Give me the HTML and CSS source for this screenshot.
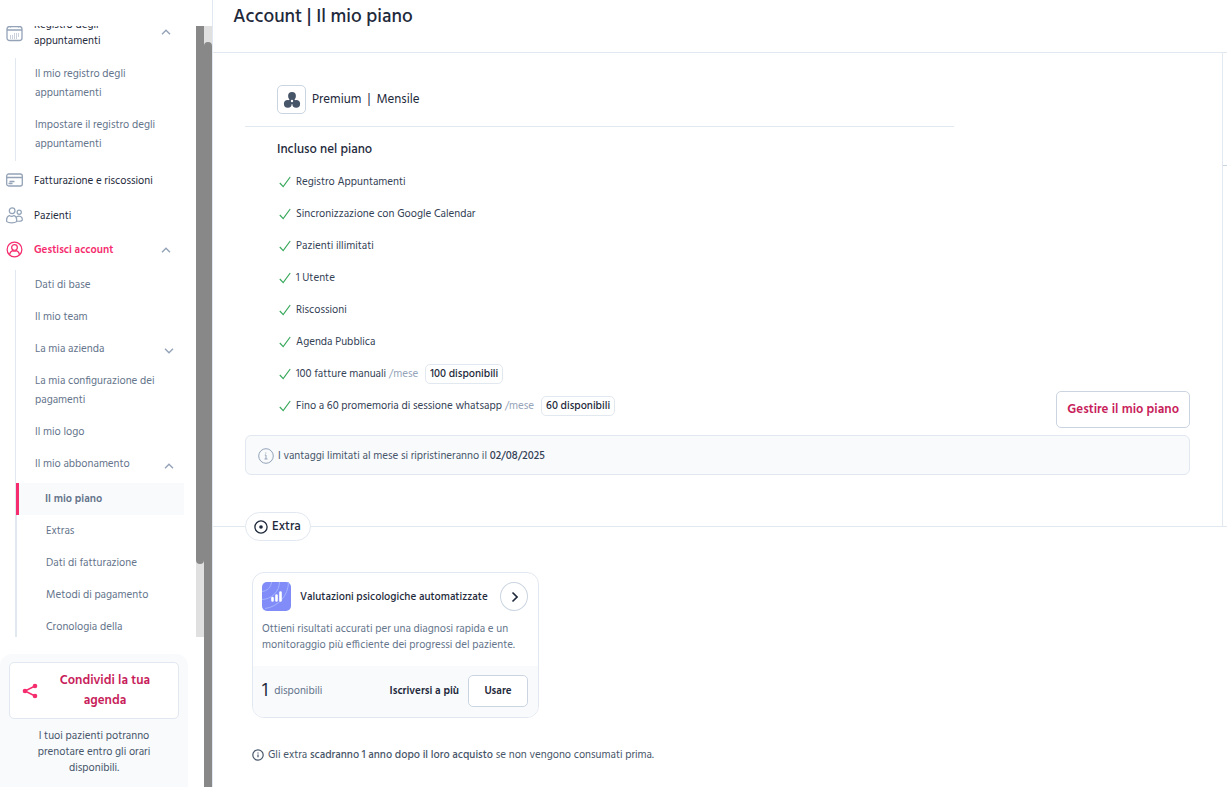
FILE: index.html
```html
<!DOCTYPE html>
<html lang="it">
<head>
<meta charset="utf-8">
<title>Account | Il mio piano</title>
<link rel="stylesheet" href="styles.css">
</head>
<body>
<svg class="defs" aria-hidden="true">
  <symbol id="up" viewBox="0 0 10 6"><path d="M1 5.2 5 1.2 9 5.2"/></symbol>
  <symbol id="down" viewBox="0 0 10 6"><path d="M1 .8 5 4.8 9 .8"/></symbol>
  <symbol id="check" viewBox="0 0 12 12"><path d="M.8 7 4.2 10.6 11.2 1"/></symbol>
</svg>
<div class="app">
  <aside class="sidebar">
    <div class="sidebar-body">
      <div class="scroller">
        <nav class="nav">
          <a class="item first" href="#">
            <svg class="icon" viewBox="0 0 17 17"><rect x="1" y="1.500" width="15" height="14" rx="2.500"/><path d="M1 5h15M4.500 0v2.500M12.500 0v2.500"/><path class="dots" d="M4.500 10.500v3M6.500 10.500v3M8.500 8.500v5M10.500 8.500v5M12.500 8.500v3"/></svg>
            <span class="label">Registro degli appuntamenti</span>
            <svg class="chev"><use href="#up"/></svg>
          </a>
          <div class="sub">
            <a href="#">Il mio registro degli appuntamenti</a>
            <a href="#">Impostare il registro degli appuntamenti</a>
          </div>
          <a class="item" href="#">
            <svg class="icon" viewBox="0 0 17 17"><rect x=".7" y="2" width="15.600" height="12" rx="2"/><path d="M.7 5.500h15.600M3.500 9.500h5M2.500 11.500h4"/></svg>
            <span class="label">Fatturazione e riscossioni</span>
          </a>
          <a class="item" href="#">
            <svg class="icon" viewBox="0 0 18 18"><circle cx="6.500" cy="4" r="3"/><circle cx="14" cy="5.500" r="2.200"/><path d="M3.500 9C1 10 .4 13 .8 15.500c2 1.800 8.400 1.800 10.400 0C11.600 13 11 10 8.500 9c-1.500 1-3.500 1-5 0zM11 10.500c3-2 6.800-.5 6.200 3.500-1 1-3.500 1.200-5.500 1"/></svg>
            <span class="label">Pazienti</span>
          </a>
          <a class="item active" href="#">
            <svg class="icon" viewBox="0 0 18 18"><circle cx="9" cy="9" r="7.800"/><circle cx="9" cy="6.800" r="3"/><path d="M3.800 14.500c.2-2.500 1.700-3.800 3.400-4.300 1 .7 2.600.7 3.600 0 1.700.5 3.200 1.800 3.400 4.300"/></svg>
            <span class="label">Gestisci account</span>
            <svg class="chev"><use href="#up"/></svg>
          </a>
          <div class="sub account">
            <a href="#">Dati di base</a>
            <a href="#">Il mio team</a>
            <a href="#">La mia azienda <svg class="chev"><use href="#down"/></svg></a>
            <a href="#">La mia configurazione dei pagamenti</a>
            <a href="#">Il mio logo</a>
            <a href="#">Il mio abbonamento <svg class="chev"><use href="#up"/></svg></a>
            <div class="nested">
              <a class="current" href="#">Il mio piano</a>
              <a href="#">Extras</a>
              <a href="#">Dati di fatturazione</a>
              <a href="#">Metodi di pagamento</a>
              <a href="#">Cronologia della</a>
            </div>
          </div>
        </nav>
        <div class="track"><div class="thumb inner"></div></div>
      </div>
      <div class="share">
        <button class="share-btn" type="button">
          <svg viewBox="0 0 16 16"><path d="M13 3 3 8l10 5"/><circle cx="3" cy="8" r="2.300"/><circle cx="13" cy="3" r="2.300"/><circle cx="13" cy="13" r="2.300"/></svg>
          <span>Condividi la tua agenda</span>
        </button>
        <p>I tuoi pazienti potranno prenotare entro gli orari disponibili.</p>
      </div>
    </div>
    <div class="track"><div class="thumb outer"></div></div>
  </aside>

  <main class="main">
    <header class="top"><h1>Account | Il mio piano</h1></header>
    <div class="panel-row">
      <section class="panel">
        <div class="plan">
          <div class="plan-info">
            <div class="plan-name">
              <span class="plan-icon"><svg viewBox="0 0 18 18"><path d="M9 3.500 4 13h10z"/><circle cx="9" cy="5" r="3.900"/><circle cx="4.800" cy="12.800" r="3.900"/><circle cx="13.200" cy="12.800" r="3.900"/><circle class="hole" cx="9" cy="10" r="1.200"/></svg></span>
              <span>Premium</span><span>|</span><span>Mensile</span>
            </div>
            <h2>Incluso nel piano</h2>
            <ul class="features">
              <li><svg class="check"><use href="#check"/></svg>Registro Appuntamenti</li>
              <li><svg class="check"><use href="#check"/></svg>Sincronizzazione con Google Calendar</li>
              <li><svg class="check"><use href="#check"/></svg>Pazienti illimitati</li>
              <li><svg class="check"><use href="#check"/></svg>1 Utente</li>
              <li><svg class="check"><use href="#check"/></svg>Riscossioni</li>
              <li><svg class="check"><use href="#check"/></svg>Agenda Pubblica</li>
              <li><svg class="check"><use href="#check"/></svg>100 fatture manuali <small>/mese</small><b class="tag">100 disponibili</b></li>
              <li><svg class="check"><use href="#check"/></svg>Fino a 60 promemoria di sessione whatsapp <small>/mese</small><b class="tag">60 disponibili</b></li>
            </ul>
          </div>
          <button class="btn manage" type="button">Gestire il mio piano</button>
        </div>
        <div class="notice">
          <svg viewBox="0 0 16 16"><circle cx="8" cy="8" r="7.300"/><path d="M6.800 7H8v4M6.500 11h3M7.800 4.500v1"/></svg>
          <span>I vantaggi limitati al mese si ripristineranno il <b>02/08/2025</b></span>
        </div>
        <div class="pill">
          <svg viewBox="0 0 14 14"><circle cx="7" cy="7" r="6.100"/><circle class="dot" cx="7" cy="7" r="1.800"/></svg>
          <span>Extra</span>
        </div>
      </section>
      <div class="edge"></div>
    </div>

    <section class="extras">
      <article class="card">
        <div class="card-head">
          <svg class="logo" viewBox="0 0 29 29"><rect width="29" height="29" rx="5"/><g class="arcs"><path d="M0 9.500A10 10 0 0 0 9.500 0M0 17.500A18 18 0 0 0 17.500 0M3 26.500A27 27 0 0 0 26.500 0"/></g><path class="bars" d="M10.500 16V18.500M14.500 13.500V18.500M18.500 10.500V18.500"/></svg>
          <h3>Valutazioni psicologiche automatizzate</h3>
          <button class="round" type="button" aria-label="Apri"><svg viewBox="0 0 8 12"><path d="M2.500 1.500 7 6l-4.500 4.500"/></svg></button>
        </div>
        <p>Ottieni risultati accurati per una diagnosi rapida e un monitoraggio più efficiente dei progressi del paziente.</p>
        <div class="card-foot">
          <span class="count">1</span><span class="avail">disponibili</span>
          <a href="#">Iscriversi a più</a>
          <button class="btn use" type="button">Usare</button>
        </div>
      </article>
      <p class="note">
        <svg viewBox="0 0 12 12"><circle cx="6" cy="6" r="5.200"/><path d="M6 5.500V8.200M6 3.600v1"/></svg>
        <span>Gli extra <b>scadranno 1 anno dopo il loro acquisto</b> se non vengono consumati prima.</span>
      </p>
    </section>
  </main>
</div>
</body>
</html>
```
FILE: styles.css
```css
* { box-sizing: border-box; margin: 0; padding: 0; }
body {
  font-family: Hind, "Noto Sans", sans-serif;
  font-size: 11px;
  line-height: 16px;
  color: #1e293b;
  background: #fff;
}
a { color: inherit; text-decoration: none; }
button { font: inherit; cursor: pointer; background: #fff; }
svg { fill: none; stroke: currentColor; flex: none; }
.defs { display: none; }
.app { display: grid; grid-template-columns: 213px 1fr; grid-template-rows: minmax(0, 1fr); height: 100vh; overflow: hidden; }

.sidebar { display: flex; padding-top: 26px; border-right: 1px solid #e2e8f0; min-height: 0; }
.sidebar-body { flex: 1; display: flex; flex-direction: column; min-height: 0; }
.scroller { flex: 1; display: flex; min-height: 0; overflow: hidden; }
.nav { flex: 1; overflow: hidden; }
.track { width: 8px; background: #e0e0e0; }
.thumb { background: #888; }
.inner { height: 88%; border-radius: 0 0 4px 4px; }
.track:has(> .outer) { padding-top: 16px; }
.outer { height: 100%; border-radius: 4px 4px 0 0; }

.item { display: flex; align-items: center; height: 35px; padding: 0 24px 0 6px; gap: 11px; }
.item.first { height: 32px; margin: -9px 0 9px; }
.item.first .chev { margin-bottom: 2px; }
.label { flex: 1; }
.icon { width: 17px; height: 17px; color: #94a3b8; stroke-width: 1.3; }
.dots { stroke-width: 1; stroke-dasharray: 1 1; }
.chev { width: 10px; height: 6px; color: #94a3b8; stroke-width: 1.4; }
.item .chev { margin-right: 1px; }
.item.active { height: 33px; color: #f52d6e; font-weight: 600; }
.active .icon, .active .label { color: #f52d6e; }
.sub {
  display: flex; flex-direction: column; gap: 13px;
  margin: 0 12px 2px 15px; padding: 7px 0 7px 19px;
  border-left: 1px solid #e2e8f0;
  color: #64748b; line-height: 19px;
}
.sub a { display: flex; align-items: center; justify-content: space-between; padding-right: 10px; }
.sub .chev { margin-top: 3px; }
.sub.account { margin-top: 4px; padding: 6px 0 0 19px; }
.nested { margin: -4px 0 0 -19px; border-left: 1px solid #e2e8f0; }
.nested a { height: 32px; padding-left: 29px; }
.nested .current { margin-left: -1px; padding-left: 26px; border-left: 3px solid #f52d6e; background: #f8fafc; font-weight: 600; }

.share { width: 188px; height: 133px; margin-top: 17px; padding: 8px 9px; background: #f8fafc; border-radius: 12px 12px 0 0; text-align: center; color: #475569; }
.share-btn {
  display: flex; align-items: center; width: 100%; padding: 8px 12px 7px; margin-bottom: 9px;
  border: 1px solid #e2e8f0; border-radius: 5px;
  color: #c81e5b; font-size: 13px; line-height: 20px; font-weight: 600;
}
.share-btn span { flex: 1; padding: 0 12px 0 18px; }
.share-btn svg { width: 16px; height: 16px; stroke: #f52d6e; fill: #f52d6e; }
.share-btn circle { stroke: none; }
.share-btn path { fill: none; stroke-width: 1.5; }
.share p { padding: 0 20px; }

.main { min-width: 0; }
.top { height: 53px; padding: 5px 20px; border-bottom: 1px solid #e2e8f0; }
h1 { font-size: 19px; line-height: 25px; font-weight: 500; }
.panel-row { display: flex; border-bottom: 1px solid #e2e8f0; }
.panel { position: relative; flex: 1; padding: 32px; border-right: 1px solid #e2e8f0; }
.edge { width: 4px; height: 113px; border-bottom: 1px solid #cbd5e1; }
.plan { display: grid; grid-template-columns: 3fr 1fr; align-items: end; }
.plan-name { display: flex; align-items: center; gap: 6px; padding: 0 32px 12px; border-bottom: 1px solid #e2e8f0; font-size: 13px; }
.plan-icon { display: grid; place-items: center; width: 29px; height: 29px; border: 1px solid #cbd5e1; border-radius: 5px; color: #475569; }
.plan-icon svg { width: 18px; height: 18px; fill: currentColor; stroke: none; }
.plan-icon .hole { fill: #fff; }
h2 { padding: 14px 32px 7px; font-size: 13px; line-height: 18px; font-weight: 500; }
.features { list-style: none; padding: 0 34px 6px; color: #334155; }
.features li { display: flex; align-items: center; height: 32px; white-space: pre; }
.check { width: 12px; height: 12px; margin-right: 5px; color: #38a85c; stroke-width: 1.2; }
small { font-size: 11px; color: #94a3b8; }
b { font-weight: 500; }
.tag { margin-left: 7px; padding: 1px 4px; border: 1px solid #e2e8f0; border-radius: 5px; color: #1e293b; }
.btn { border: 1px solid #cbd5e1; border-radius: 5px; font-weight: 600; }
.manage { justify-self: end; height: 37px; padding: 0 10px; color: #c81e5b; font-size: 13px; }
.notice { display: flex; align-items: center; gap: 4px; height: 40px; margin: 7px 0 19px; padding: 1px 12px 0; border: 1px solid #e2e8f0; border-radius: 6px; background: #f8fafc; color: #475569; }
.notice svg { width: 16px; height: 16px; color: #94a3b8; }
.notice b { color: #334155; }
.pill { position: absolute; left: 32px; bottom: -15px; display: flex; align-items: center; gap: 4px; height: 29px; padding: 0 9px 0 8px; border: 1px solid #e2e8f0; border-radius: 15px; background: #fff; font-size: 13px; font-weight: 500; }
.pill svg { width: 14px; height: 14px; stroke-width: 1.3; }
.pill .dot { fill: currentColor; stroke: none; }

.extras { padding: 45px 39px; }
.card { width: 287px; border: 1px solid #e2e8f0; border-radius: 12px; overflow: hidden; }
.card-head { display: flex; align-items: center; padding: 9px 10px 10px 9px; }
.card-head h3 { flex: 1; padding-left: 9px; font-size: 11px; font-weight: 500; white-space: nowrap; }
.logo { width: 29px; height: 29px; stroke: none; }
.logo rect { fill: #818cf8; }
.arcs { fill: none; stroke: #a5b4fc; }
.bars { stroke: #fff; stroke-width: 2.6; stroke-linecap: round; }
.round { display: grid; place-items: center; width: 28px; height: 29px; border: 1px solid #cbd5e1; border-radius: 50%; color: #1e293b; }
.round svg { width: 8px; height: 12px; stroke-width: 1.6; }
.card p { padding: 0 10px 13px 9px; color: #64748b; }
.card-foot { display: flex; align-items: center; height: 51px; padding: 0 10px 2px 9px; background: #f8fafc; }
.count { font-size: 19px; }
.avail { flex: 1; padding-left: 6px; color: #64748b; }
.card-foot a { padding-right: 9px; font-weight: 600; }
.use { width: 60px; height: 32px; color: #1e293b; }
.note { display: flex; align-items: center; gap: 4px; margin-top: 29px; color: #475569; }
.note svg { width: 12px; height: 12px; stroke-width: 1.2; }
```
